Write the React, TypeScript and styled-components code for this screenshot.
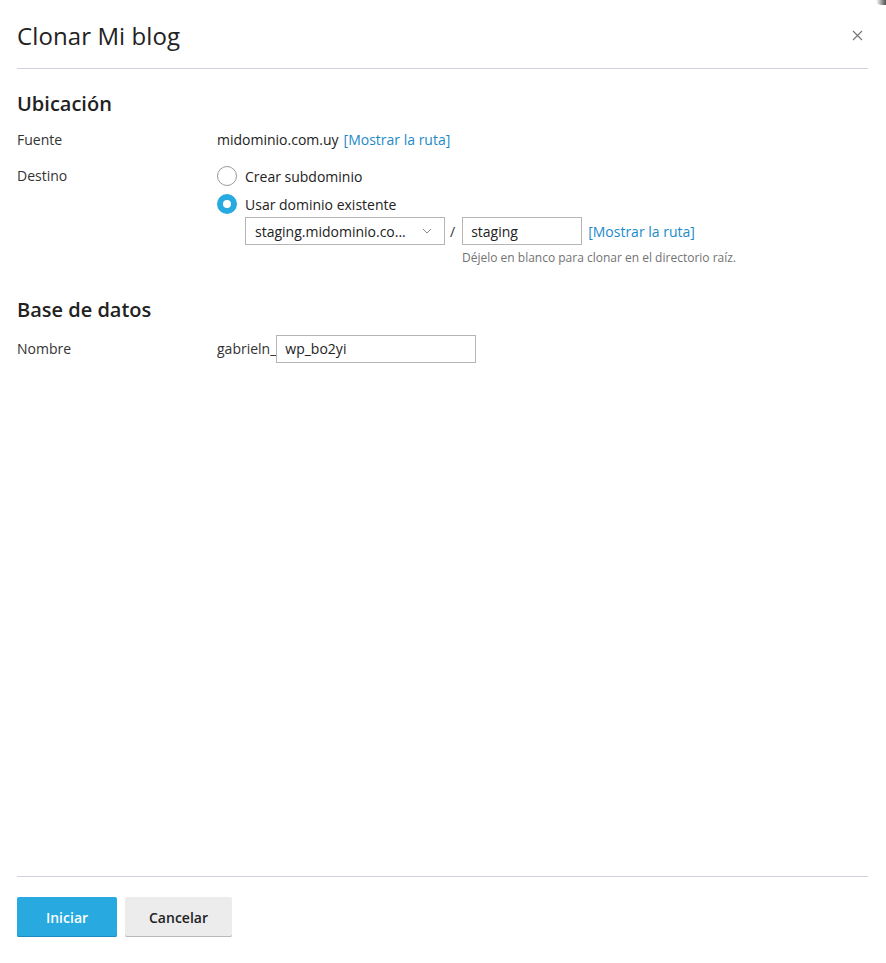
import React from "react";
import styled, { createGlobalStyle } from "styled-components";

const GlobalStyle = createGlobalStyle`
  html, body {
    margin: 0;
    padding: 0;
    background: #fff;
  }
  body {
    font-family: "Open Sans", "Noto Sans", sans-serif;
    color: #222;
    font-size: 14px;
  }
  * { box-sizing: border-box; }
`;

const Dialog = styled.div`
  display: flex;
  flex-direction: column;
  width: 886px;
  height: 963px;
  padding: 0 18px 0 17px;
  background: #fff;
`;

const Header = styled.div`
  display: flex;
  align-items: center;
  justify-content: space-between;
  height: 69px;
  padding-top: 3px;
  border-bottom: 1px solid #d2d2de;
`;

const Title = styled.h1`
  margin: 0;
  font-size: 24px;
  font-weight: 400;
  color: #222;
  letter-spacing: 0.1px;
`;

const CloseButton = styled.button`
  display: flex;
  align-items: center;
  justify-content: center;
  width: 20px;
  height: 20px;
  margin-right: 1px;
  padding: 0;
  border: 0;
  background: none;
  cursor: pointer;
`;

const Body = styled.div`
  flex: 1;
  display: flex;
  flex-direction: column;
`;

const Section = styled.section<{ $top: number }>`
  display: flex;
  flex-direction: column;
  padding-top: ${({ $top }) => $top}px;
`;

const SectionTitle = styled.h2<{ $gap?: number }>`
  margin: 0 0 ${({ $gap }) => $gap ?? 12}px;
  font-size: 20px;
  font-weight: 600;
  line-height: 28px;
  color: #222;
`;

const Row = styled.div<{ $gap?: number; $center?: boolean }>`
  display: grid;
  grid-template-columns: 200px 1fr;
  align-items: ${({ $center }) => ($center ? "center" : "start")};
  margin-bottom: ${({ $gap }) => $gap ?? 8}px;
`;

const Label = styled.div`
  line-height: 20px;
  color: #333;
`;

const Field = styled.div`
  display: flex;
  flex-direction: column;
`;

const Inline = styled.div`
  display: flex;
  align-items: center;
  line-height: 20px;
`;

const Link = styled.a<{ $gap?: number }>`
  margin-left: ${({ $gap }) => $gap ?? 5}px;
  color: #1d8ac7;
  text-decoration: none;
  cursor: pointer;
`;

const RadioRow = styled.label`
  display: flex;
  align-items: center;
  height: 20px;
  margin-bottom: 8px;
  cursor: pointer;
`;

const RadioDot = styled.span<{ $checked?: boolean }>`
  display: inline-block;
  width: 20px;
  height: 20px;
  margin-right: 8px;
  border-radius: 50%;
  background: #fff;
  border: ${({ $checked }) => ($checked ? "6px solid #28aae1" : "1px solid #9b9b9b")};
`;

const PathRow = styled.div`
  display: flex;
  align-items: center;
  margin-left: 28px;
  margin-top: -5px;
`;

const Select = styled.div`
  display: flex;
  align-items: center;
  justify-content: space-between;
  width: 200px;
  height: 28px;
  padding: 0 12px 0 9px;
  border: 1px solid #b5b5b5;
  background: #fff;
  color: #222;
`;

const Slash = styled.span`
  margin: 0 7px 0 5px;
  color: #333;
`;

const TextInput = styled.div<{ $width: number }>`
  display: flex;
  align-items: center;
  width: ${({ $width }) => $width}px;
  height: 28px;
  padding: 0 8px;
  border: 1px solid #b5b5b5;
  background: #fff;
  color: #222;
`;

const Hint = styled.div`
  margin: 5px 0 0 245px;
  font-size: 12px;
  line-height: 16px;
  color: #737373;
`;

const Prefix = styled.span`
  color: #333;
`;

const Footer = styled.div`
  display: flex;
  gap: 8px;
  padding: 20px 0 26px;
  border-top: 1px solid #d2d2de;
`;

const Button = styled.button<{ $primary?: boolean }>`
  height: 40px;
  padding: 0;
  width: ${({ $primary }) => ($primary ? 100 : 107)}px;
  border: 0;
  border-radius: 2px;
  font-family: "Open Sans", "Noto Sans", sans-serif;
  font-size: 14px;
  font-weight: 600;
  cursor: pointer;
  color: ${({ $primary }) => ($primary ? "#fff" : "#222")};
  background: ${({ $primary }) => ($primary ? "#28aae1" : "#ececec")};
  box-shadow: ${({ $primary }) =>
    $primary ? "inset 0 -1px 0 #1b8bbd" : "inset 0 -1px 0 #b9b9b9"};
`;

const Corner = styled.div`
  position: absolute;
  top: 0;
  right: 0;
  width: 10px;
  height: 5px;
  background: linear-gradient(to right, rgba(90, 90, 90, 0), rgba(60, 60, 60, 0.9));
  border-bottom-left-radius: 10px;
`;

const Page = styled.div`
  position: relative;
`;

function CloseIcon() {
  return (
    <svg width="11" height="11" viewBox="0 0 11 11">
      <path d="M1 1 L10 10 M10 1 L1 10" stroke="#777" strokeWidth="1.2" />
    </svg>
  );
}

function Chevron() {
  return (
    <svg width="10" height="6" viewBox="0 0 10 6">
      <path d="M1 1 L5 5 L9 1" fill="none" stroke="#888" strokeWidth="1" />
    </svg>
  );
}

export default function App() {
  return (
    <Page>
      <GlobalStyle />
      <Corner />
      <Dialog>
        <Header>
          <Title>Clonar Mi blog</Title>
          <CloseButton aria-label="Cerrar">
            <CloseIcon />
          </CloseButton>
        </Header>
        <Body>
          <Section $top={21}>
            <SectionTitle>Ubicación</SectionTitle>
            <Row $gap={16}>
              <Label>Fuente</Label>
              <Inline>
                midominio.com.uy
                <Link>[Mostrar la ruta]</Link>
              </Inline>
            </Row>
            <Row>
              <Label>Destino</Label>
              <Field>
                <RadioRow>
                  <RadioDot />
                  Crear subdominio
                </RadioRow>
                <RadioRow>
                  <RadioDot $checked />
                  Usar dominio existente
                </RadioRow>
                <PathRow>
                  <Select>
                    staging.midominio.co...
                    <Chevron />
                  </Select>
                  <Slash>/</Slash>
                  <TextInput $width={120}>staging</TextInput>
                  <Link $gap={6}>[Mostrar la ruta]</Link>
                </PathRow>
                <Hint>Déjelo en blanco para clonar en el directorio raíz.</Hint>
              </Field>
            </Row>
          </Section>
          <Section $top={22}>
            <SectionTitle $gap={11}>Base de datos</SectionTitle>
            <Row $center>
              <Label>Nombre</Label>
              <Inline>
                <Prefix>gabrieln_</Prefix>
                <TextInput $width={200}>wp_bo2yi</TextInput>
              </Inline>
            </Row>
          </Section>
        </Body>
        <Footer>
          <Button $primary>Iniciar</Button>
          <Button>Cancelar</Button>
        </Footer>
      </Dialog>
    </Page>
  );
}
